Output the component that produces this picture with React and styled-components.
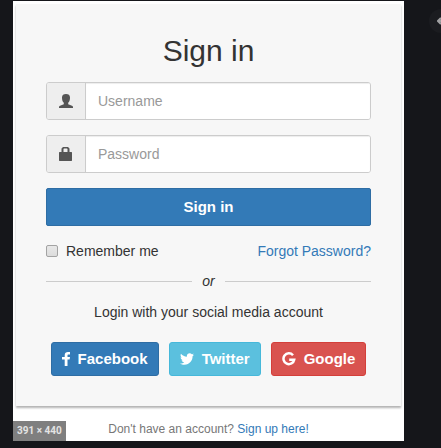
import React from "react";
import styled, { createGlobalStyle } from "styled-components";
import { FaTwitter } from "react-icons/fa";

const GlobalStyle = createGlobalStyle`
  *, *::before, *::after { box-sizing: border-box; }
  body {
    margin: 0;
    background: #15161a;
    color: #333;
    font: 14px/20px "Liberation Sans", Arial, sans-serif;
  }
  button, input { font: inherit; }
`;

const Viewer = styled.main`
  position: relative;
  min-height: 100vh;
  padding: 1px 37px 7px 13px;
  overflow: hidden;
`;

const Preview = styled.section`
  position: relative;
  padding: 3px 3px 2px;
  background: #fff;
`;

const SizeBadge = styled.span`
  position: absolute;
  left: 0;
  bottom: 0;
  padding: 0 4px;
  background: #7f7f7f;
  color: #e4e4e4;
  font: 700 10px/20px Roboto, sans-serif;
`;

const BackButton = styled.button`
  position: absolute;
  top: 9px;
  right: -12px;
  display: flex;
  align-items: center;
  justify-content: center;
  width: 24px;
  height: 24px;
  padding: 0;
  border: 0;
  border-radius: 50%;
  background: #1b1c20;
  color: #a0a0a2;
`;

const Card = styled.form`
  display: flex;
  flex-direction: column;
  padding: 30px;
  background: #f7f7f7;
  box-shadow: 0 2px 2px rgba(0, 0, 0, 0.3);
`;

const Title = styled.h2`
  margin: 0 0 15px;
  font-size: 30px;
  font-weight: 400;
  line-height: 33px;
  text-align: center;
`;

const Field = styled.label`
  display: flex;
  height: 38px;
  margin-bottom: 15px;
  border: 1px solid #ccc;
  border-radius: 3px;
  overflow: hidden;
`;

const Addon = styled.span`
  display: flex;
  flex: none;
  align-items: center;
  justify-content: center;
  width: 39px;
  border-right: 1px solid #ccc;
  background: #eee;
  color: #555;
`;

const TextInput = styled.input`
  flex: 1;
  min-width: 0;
  padding: 0 12px;
  border: 0;
  outline: 0;
  background: #fff;
  box-shadow: inset 0 1px 1px rgba(0, 0, 0, 0.075);
  color: #555;
  &::placeholder { color: #999; opacity: 1; }
`;

const Button = styled.button`
  display: flex;
  align-items: center;
  justify-content: center;
  gap: 8px;
  height: ${({ $large }) => ($large ? 38 : 34)}px;
  padding: 0 10px;
  border: 1px solid ${({ $edge }) => $edge};
  border-radius: ${({ $large }) => ($large ? 2 : 3)}px;
  background: ${({ $fill }) => $fill};
  color: #fff;
  font-size: 15px;
  font-weight: 700;
`;

const Options = styled.div`
  display: flex;
  align-items: center;
  justify-content: space-between;
  margin-top: 15px;
`;

const Remember = styled.label`
  display: flex;
  align-items: center;
  gap: 8px;
`;

const Checkbox = styled.input`
  appearance: none;
  width: 12px;
  height: 12px;
  margin: 0;
  border: 1px solid #a3a3a3;
  border-radius: 2px;
  background: linear-gradient(#e8e8e8, #dcdcdc);
  &:checked { background: #337ab7; }
`;

const Link = styled.a`
  color: #337ab7;
  text-decoration: none;
`;

const Divider = styled.div`
  display: flex;
  align-items: center;
  gap: 10px;
  margin-top: 10px;
  font-style: italic;
  &::before, &::after {
    content: "";
    flex: 1;
    border-top: 1px solid #ccc;
  }
`;

const SocialTitle = styled.p`
  margin: 11px 0 20px;
  text-align: center;
`;

const SocialRow = styled.div`
  display: flex;
  justify-content: center;
  gap: 10px;
`;

const Footer = styled.p`
  margin: 13px 0 0;
  color: #777;
  font-size: 12px;
  text-align: center;
`;

const UserIcon = () => (
  <svg width="14" height="14" viewBox="0 0 14 14" fill="currentColor" aria-hidden="true">
    <path d="M7 0C4.500 0 3 1.200 3 3.400c0 2 .4 4.200 1.800 5.400v1.400L1 11.700c-.7.3-1 .8-1 1.500V14h14v-.8c0-.7-.3-1.200-1-1.500L9.200 10.200V8.800C10.600 7.600 11 5.400 11 3.400 11 1.200 9.500 0 7 0z" />
  </svg>
);

const LockIcon = () => (
  <svg width="14" height="14" viewBox="0 0 14 14" fill="currentColor" aria-hidden="true">
    <path fillRule="evenodd" d="M4 0h5l1.500 1.500V5h2l.5.5v8l-.5.5H.5L0 13.500v-8L.5 5h2V1.500zM5 1.500L4.500 2v3h4V2L8 1.500z" />
  </svg>
);

const FacebookIcon = () => (
  <svg width="8" height="14" viewBox="0 0 8 14" fill="currentColor" aria-hidden="true">
    <path d="M8 .1v2.300H6.600c-.9 0-1.100.5-1.100 1.100V5H8l-.4 2.500H5.500V14H2.700V7.500H0V5h2.700V3.200C2.700 1.100 4 0 6 0c.9 0 1.700 0 2 .1z" />
  </svg>
);

const GoogleIcon = () => (
  <svg width="14" height="14" viewBox="0 0 14 14" fill="none" stroke="currentColor" strokeWidth="2.500" aria-hidden="true">
    <path d="M11 3.200A5.400 5.400 0 1 0 12.200 7.700H7.200" />
  </svg>
);

const ArrowIcon = () => (
  <svg width="8" height="8" viewBox="0 0 8 8" fill="none" stroke="currentColor" strokeWidth="2" aria-hidden="true">
    <path d="M4 1L1 4l3 3M2 4h6" />
  </svg>
);

export default function App() {
  return (
    <>
      <GlobalStyle />
      <Viewer>
        <Preview>
          <Card onSubmit={(event) => event.preventDefault()}>
            <Title>Sign in</Title>
            <Field>
              <Addon><UserIcon /></Addon>
              <TextInput type="text" placeholder="Username" aria-label="Username" />
            </Field>
            <Field>
              <Addon><LockIcon /></Addon>
              <TextInput type="password" placeholder="Password" aria-label="Password" />
            </Field>
            <Button type="submit" $large $fill="#337ab7" $edge="#2e6da4">Sign in</Button>
            <Options>
              <Remember><Checkbox type="checkbox" />Remember me</Remember>
              <Link href="#forgot">Forgot Password?</Link>
            </Options>
            <Divider>or</Divider>
            <SocialTitle>Login with your social media account</SocialTitle>
            <SocialRow>
              <Button type="button" $fill="#337ab7" $edge="#2e6da4">
                <FacebookIcon />Facebook
              </Button>
              <Button type="button" $fill="#5bc0de" $edge="#46b8da">
                <FaTwitter size={14} />Twitter
              </Button>
              <Button type="button" $fill="#d9534f" $edge="#d43f3a">
                <GoogleIcon />Google
              </Button>
            </SocialRow>
          </Card>
          <Footer>Don't have an account? <Link href="#signup">Sign up here!</Link></Footer>
          <SizeBadge>391 × 440</SizeBadge>
        </Preview>
        <BackButton type="button" aria-label="Back"><ArrowIcon /></BackButton>
      </Viewer>
    </>
  );
}
